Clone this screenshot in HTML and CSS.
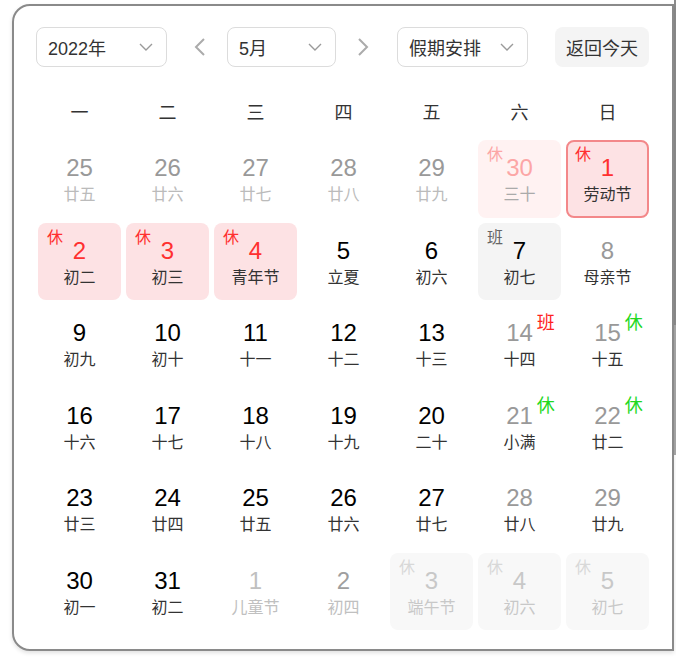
FILE: index.html
```html
<!DOCTYPE html>
<html lang="zh-CN">
<head>
    <meta charset="UTF-8">
    <title>日历</title>
    <link rel="stylesheet" href="styles.css">
</head>
<body>
    <div class="calendar">
        <!-- 顶部工具栏 -->
        <div class="toolbar">
            <div class="select select-year">
                <span>2022年</span>
                <svg class="caret" width="14" height="8" viewBox="0 0 14 8"><polyline points="1,1 7,7 13,1" /></svg>
            </div>
            <span class="arrow arrow-prev">
                <svg width="12" height="20" viewBox="0 0 12 20"><polyline points="10,2 2,10 10,18" /></svg>
            </span>
            <div class="select select-month">
                <span>5月</span>
                <svg class="caret" width="14" height="8" viewBox="0 0 14 8"><polyline points="1,1 7,7 13,1" /></svg>
            </div>
            <span class="arrow arrow-next">
                <svg width="12" height="20" viewBox="0 0 12 20"><polyline points="2,2 10,10 2,18" /></svg>
            </span>
            <div class="select select-holiday">
                <span>假期安排</span>
                <svg class="caret" width="14" height="8" viewBox="0 0 14 8"><polyline points="1,1 7,7 13,1" /></svg>
            </div>
            <button class="today-btn">返回今天</button>
        </div>

        <!-- 星期 -->
        <div class="week">
            <span>一</span><span>二</span><span>三</span><span>四</span><span>五</span><span>六</span><span>日</span>
        </div>

        <!-- 日期 -->
        <div class="days">
            <div class="day prev"><span class="num">25</span><span class="lunar">廿五</span></div>
            <div class="day prev"><span class="num">26</span><span class="lunar">廿六</span></div>
            <div class="day prev"><span class="num">27</span><span class="lunar">廿七</span></div>
            <div class="day prev"><span class="num">28</span><span class="lunar">廿八</span></div>
            <div class="day prev"><span class="num">29</span><span class="lunar">廿九</span></div>
            <div class="day holiday faded"><span class="tag">休</span><span class="num">30</span><span class="lunar">三十</span></div>
            <div class="day holiday today"><span class="tag">休</span><span class="num">1</span><span class="lunar">劳动节</span></div>

            <div class="day holiday"><span class="tag">休</span><span class="num">2</span><span class="lunar">初二</span></div>
            <div class="day holiday"><span class="tag">休</span><span class="num">3</span><span class="lunar">初三</span></div>
            <div class="day holiday"><span class="tag">休</span><span class="num">4</span><span class="lunar">青年节</span></div>
            <div class="day"><span class="num">5</span><span class="lunar">立夏</span></div>
            <div class="day"><span class="num">6</span><span class="lunar">初六</span></div>
            <div class="day workday"><span class="tag">班</span><span class="num">7</span><span class="lunar">初七</span></div>
            <div class="day weekend"><span class="num">8</span><span class="lunar">母亲节</span></div>

            <div class="day"><span class="num">9</span><span class="lunar">初九</span></div>
            <div class="day"><span class="num">10</span><span class="lunar">初十</span></div>
            <div class="day"><span class="num">11</span><span class="lunar">十一</span></div>
            <div class="day"><span class="num">12</span><span class="lunar">十二</span></div>
            <div class="day"><span class="num">13</span><span class="lunar">十三</span></div>
            <div class="day weekend"><span class="num">14<i class="mark mark-work">班</i></span><span class="lunar">十四</span></div>
            <div class="day weekend"><span class="num">15<i class="mark mark-rest">休</i></span><span class="lunar">十五</span></div>

            <div class="day"><span class="num">16</span><span class="lunar">十六</span></div>
            <div class="day"><span class="num">17</span><span class="lunar">十七</span></div>
            <div class="day"><span class="num">18</span><span class="lunar">十八</span></div>
            <div class="day"><span class="num">19</span><span class="lunar">十九</span></div>
            <div class="day"><span class="num">20</span><span class="lunar">二十</span></div>
            <div class="day weekend"><span class="num">21<i class="mark mark-rest">休</i></span><span class="lunar">小满</span></div>
            <div class="day weekend"><span class="num">22<i class="mark mark-rest">休</i></span><span class="lunar">廿二</span></div>

            <div class="day"><span class="num">23</span><span class="lunar">廿三</span></div>
            <div class="day"><span class="num">24</span><span class="lunar">廿四</span></div>
            <div class="day"><span class="num">25</span><span class="lunar">廿五</span></div>
            <div class="day"><span class="num">26</span><span class="lunar">廿六</span></div>
            <div class="day"><span class="num">27</span><span class="lunar">廿七</span></div>
            <div class="day weekend"><span class="num">28</span><span class="lunar">廿八</span></div>
            <div class="day weekend"><span class="num">29</span><span class="lunar">廿九</span></div>

            <div class="day"><span class="num">30</span><span class="lunar">初一</span></div>
            <div class="day"><span class="num">31</span><span class="lunar">初二</span></div>
            <div class="day next light"><span class="num">1</span><span class="lunar">儿童节</span></div>
            <div class="day next"><span class="num">2</span><span class="lunar">初四</span></div>
            <div class="day disabled"><span class="tag">休</span><span class="num">3</span><span class="lunar">端午节</span></div>
            <div class="day disabled"><span class="tag">休</span><span class="num">4</span><span class="lunar">初六</span></div>
            <div class="day disabled"><span class="tag">休</span><span class="num">5</span><span class="lunar">初七</span></div>
        </div>
    </div>
</body>
</html>
```

FILE: styles.css
```css
* {
    margin: 0;
    padding: 0;
    box-sizing: border-box;
    font-family: 'Liberation Sans', 'Noto Sans CJK SC', sans-serif;
}

body {
    width: 676px;
    height: 658px;
    overflow: hidden;
    padding: 4px 0 0 12px;
    /* 右侧滚动条残影 */
    background:
        linear-gradient(#8c8c8c, #8c8c8c) right 0 top 0 / 2px 325px no-repeat,
        linear-gradient(#a8a8a8, #a8a8a8) right 0 top 325px / 2px 130px no-repeat,
        #fff;
}

.calendar {
    width: 662px;
    height: 647px;
    border: 2px solid #8a8a8a;
    border-radius: 18px 0 0 18px;
    box-shadow: 0 2px 4px rgba(0, 0, 0, 0.12);
    padding: 21px 23px 0 22px;
    background: #fff;
}

/* 工具栏 */
.toolbar {
    display: flex;
    align-items: center;
    height: 40px;
}

.select {
    height: 40px;
    border: 1px solid #dcdcdc;
    border-radius: 8px;
    display: flex;
    align-items: center;
    justify-content: space-between;
    padding: 0 13px 0 11px;
    font-size: 18px;
    color: #333;
}

.select-year {
    width: 131px;
}

.select-month {
    width: 109px;
}

.select-holiday {
    width: 131px;
}

.caret polyline {
    fill: none;
    stroke: #9a9a9a;
    stroke-width: 1.4;
}

.arrow {
    display: flex;
    align-items: center;
}

.arrow polyline {
    fill: none;
    stroke: #ababab;
    stroke-width: 2;
}

.arrow-prev {
    margin: 0 21px 0 27px;
}

.arrow-next {
    margin: 0 28px 0 21px;
}

.today-btn {
    margin-left: auto;
    width: 94px;
    height: 40px;
    border: none;
    border-radius: 8px;
    background: #f4f4f4;
    color: #333;
    font-size: 18px;
}

/* 星期 */
.week,
.days {
    display: grid;
    grid-template-columns: repeat(7, 1fr);
    column-gap: 5px;
    width: 611px;
    margin-left: 2px;
}

.week {
    margin: 34px 0 15px 2px;
    line-height: 24px;
    font-size: 18px;
    color: #333;
    text-align: center;
}

.days {
    row-gap: 5px;
    grid-auto-rows: 77.5px;
}

/* 日期格子 */
.day {
    position: relative;
    display: flex;
    flex-direction: column;
    align-items: center;
    border-radius: 8px;
    border: 2px solid transparent;
    padding-top: 12px;
}

.num {
    position: relative;
    font-size: 24px;
    line-height: 28px;
    color: #000;
}

.lunar {
    margin-top: 3px;
    font-size: 16px;
    line-height: 20px;
    color: #333;
}

.tag {
    position: absolute;
    top: 5px;
    left: 7px;
    font-size: 16px;
    line-height: 16px;
}

.mark {
    position: absolute;
    left: 100%;
    top: -6px;
    margin-left: 4px;
    font-style: normal;
    font-size: 18px;
    line-height: 20px;
}

.mark-work {
    color: #f22;
}

.mark-rest {
    color: #22d822;
}

.prev .num {
    color: #999;
}

.prev .lunar {
    color: #bbb;
}

.next .num {
    color: #9f9f9f;
}

.next .lunar,
.light .num {
    color: #c0c0c0;
}

.weekend .num {
    color: #999;
}

.holiday {
    background: #fde2e4;
}

.holiday .tag,
.holiday .num {
    color: #ff3030;
}

.holiday.today {
    border-color: #f3888a;
}

.holiday.faded {
    background: #fff2f2;
}

.holiday.faded .tag,
.holiday.faded .num {
    color: #fca6a6;
}

.holiday.faded .lunar {
    color: #aaa;
}

.workday {
    background: #f4f4f4;
}

.workday .tag {
    color: #666;
}

.disabled {
    background: #f8f8f8;
}

.disabled .tag {
    color: #d8d8d8;
}

.disabled .num,
.disabled .lunar {
    color: #c8c8c8;
}
```
